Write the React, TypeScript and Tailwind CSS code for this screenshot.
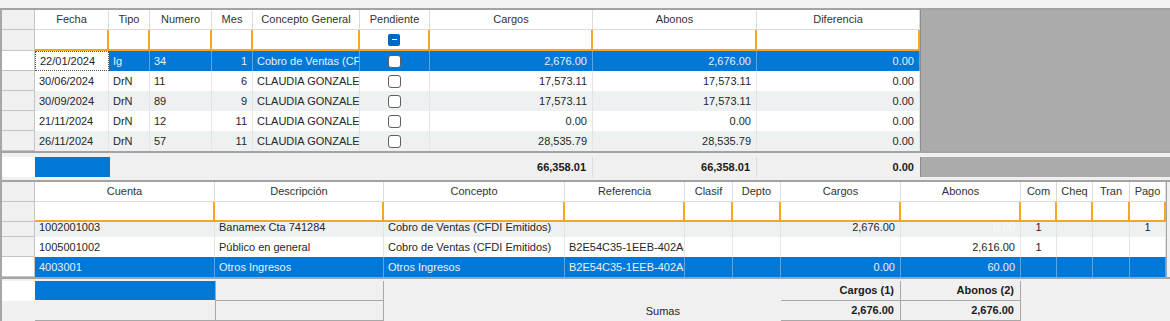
import React from 'react';

type Align = 'left' | 'right' | 'center';
type Col = { w: string; label: string; align: Align };

const cols1: Col[] = [
  { w: 'w-[74px]', label: 'Fecha', align: 'left' },
  { w: 'w-[41px]', label: 'Tipo', align: 'left' },
  { w: 'w-[62px]', label: 'Numero', align: 'left' },
  { w: 'w-[41px]', label: 'Mes', align: 'right' },
  { w: 'w-[107px]', label: 'Concepto General', align: 'left' },
  { w: 'w-[70px]', label: 'Pendiente', align: 'center' },
  { w: 'w-[163px]', label: 'Cargos', align: 'right' },
  { w: 'w-[164px]', label: 'Abonos', align: 'right' },
  { w: 'w-[163px]', label: 'Diferencia', align: 'right' },
];

const rows1: (string | boolean)[][] = [
  ['22/01/2024', 'Ig', '34', '1', 'Cobro de Ventas (CFDI Emitidos)', false, '2,676.00', '2,676.00', '0.00'],
  ['30/06/2024', 'DrN', '11', '6', 'CLAUDIA GONZALEZ HERNANDEZ', false, '17,573.11', '17,573.11', '0.00'],
  ['30/09/2024', 'DrN', '89', '9', 'CLAUDIA GONZALEZ HERNANDEZ', false, '17,573.11', '17,573.11', '0.00'],
  ['21/11/2024', 'DrN', '12', '11', 'CLAUDIA GONZALEZ HERNANDEZ', false, '0.00', '0.00', '0.00'],
  ['26/11/2024', 'DrN', '57', '11', 'CLAUDIA GONZALEZ HERNANDEZ', false, '28,535.79', '28,535.79', '0.00'],
];

const cols2: Col[] = [
  { w: 'w-[180px]', label: 'Cuenta', align: 'left' },
  { w: 'w-[169px]', label: 'Descripción', align: 'left' },
  { w: 'w-[181px]', label: 'Concepto', align: 'left' },
  { w: 'w-[120px]', label: 'Referencia', align: 'left' },
  { w: 'w-[48px]', label: 'Clasif', align: 'left' },
  { w: 'w-[48px]', label: 'Depto', align: 'left' },
  { w: 'w-[120px]', label: 'Cargos', align: 'right' },
  { w: 'w-[120px]', label: 'Abonos', align: 'right' },
  { w: 'w-[36px]', label: 'Com', align: 'center' },
  { w: 'w-[36px]', label: 'Cheq', align: 'center' },
  { w: 'w-[37px]', label: 'Tran', align: 'center' },
  { w: 'w-[36px]', label: 'Pago', align: 'center' },
];

const rows2: string[][] = [
  ['1002001003', 'Banamex Cta 741284', 'Cobro de Ventas (CFDI Emitidos)', '', '', '', '2,676.00', '0.00', '1', '', '', '1'],
  ['1005001002', 'Público en general', 'Cobro de Ventas (CFDI Emitidos)', 'B2E54C35-1EEB-402A-9B1C', '', '', '', '2,616.00', '1', '', '', ''],
  ['4003001', 'Otros Ingresos', 'Otros Ingresos', 'B2E54C35-1EEB-402A-9B1C', '', '', '0.00', '60.00', '', '', '', ''],
];

function alignCls(a: Align) {
  if (a === 'right') return 'justify-end pr-[5px]';
  if (a === 'center') return 'justify-center';
  return 'justify-start pl-[4px]';
}

function Indicator({ white, h = 'h-[20px]' }: { white?: boolean; h?: string }) {
  return (
    <div
      className={`w-[33px] shrink-0 ${h} border-r border-b border-[#c4c4c4] ${white ? 'bg-white' : 'bg-[#f0f0f0]'}`}
    />
  );
}

function Check() {
  return <div className="w-[13px] h-[13px] rounded-[3px] border border-[#5f5f5f] bg-white" />;
}

function FilterCheck() {
  return (
    <div className="w-[12px] h-[12px] rounded-[2px] bg-[#0067c0] flex items-center justify-center">
      <div className="w-[5px] h-[1px] bg-white" />
    </div>
  );
}

function HeaderRow({ cols }: { cols: Col[] }) {
  return (
    <div className="flex h-[20px]">
      <Indicator />
      {cols.map((c) => (
        <div
          key={c.label}
          className={`${c.w} shrink-0 h-[20px] bg-white border-r border-b border-[#dadada] flex items-center justify-center text-[#333] whitespace-nowrap overflow-hidden`}
        >
          {c.label}
        </div>
      ))}
    </div>
  );
}

function FilterRow({ cols, h, withCheck }: { cols: Col[]; h: string; withCheck?: boolean }) {
  return (
    <div className={`flex ${h}`}>
      <Indicator h={h} />
      {cols.map((c) => (
        <div
          key={c.label}
          className={`${c.w} shrink-0 ${h} bg-white border-r-2 border-b-2 border-[#f7a623] flex items-center justify-center`}
        >
          {withCheck && c.label === 'Pendiente' ? <FilterCheck /> : null}
        </div>
      ))}
    </div>
  );
}

export default function App() {
  return (
    <div className="w-[1170px] h-[321px] overflow-hidden bg-[#f0f0f0] text-[11px] leading-none text-[#262626] font-['Liberation_Sans',Arial,sans-serif]">
      {/* top strip */}
      <div className="h-[8px] bg-[#f3f3f3]" />

      <div className="border-l-2 border-[#a6a6a6]">
        {/* ===== Grid 1 ===== */}
        <div className="border-t-2 border-b-2 border-[#a3a3a3] flex">
          <div className="w-[918px] shrink-0">
            <HeaderRow cols={cols1} />
            <FilterRow cols={cols1} h="h-[21px]" withCheck />
            {rows1.map((r, ri) => {
              const sel = ri === 0;
              const tint = ri % 2 === 0;
              return (
                <div key={ri} className="flex h-[20px]">
                  <Indicator white={sel} />
                  {cols1.map((c, ci) => {
                    const v = r[ci];
                    const focus = sel && ci === 0;
                    const bg = focus
                      ? 'bg-white'
                      : sel
                      ? 'bg-[#0078d7] text-[#e8f1fb]'
                      : tint
                      ? 'bg-[#edf1f1]'
                      : 'bg-white';
                    const border = focus
                      ? 'border border-dotted border-[#555]'
                      : sel
                      ? 'border-r border-[#5aa6e6]'
                      : 'border-r border-[#e2e5e5]';
                    return (
                      <div
                        key={ci}
                        className={`${c.w} shrink-0 h-[20px] ${bg} ${border} flex items-center ${alignCls(c.align)} whitespace-nowrap overflow-hidden`}
                      >
                        {typeof v === 'boolean' ? <Check /> : v}
                      </div>
                    );
                  })}
                </div>
              );
            })}
          </div>
          <div className="flex-1 bg-[#ababab] border-l border-[#8c8c8c]" />
        </div>

        {/* ===== Footer totals ===== */}
        <div className="h-[4px]" />
        <div className="flex h-[20px]">
          <div className="w-[33px] shrink-0 bg-white" />
          <div className="w-[75px] shrink-0 bg-[#0078d7]" />
          <div className="w-[320px] shrink-0" />
          <div className="w-[163px] shrink-0 border-r border-[#dcdcdc] flex items-center justify-end pr-[6px] font-bold text-[#1a1a1a]">
            66,358.01
          </div>
          <div className="w-[164px] shrink-0 border-r border-[#dcdcdc] flex items-center justify-end pr-[6px] font-bold text-[#1a1a1a]">
            66,358.01
          </div>
          <div className="w-[163px] shrink-0 flex items-center justify-end pr-[6px] font-bold text-[#1a1a1a]">
            0.00
          </div>
          <div className="flex-1 bg-[#ababab] border-l border-[#8c8c8c]" />
        </div>
        <div className="h-[3px]" />

        {/* ===== Grid 2 ===== */}
        <div className="border-t-2 border-b-2 border-[#a3a3a3] flex">
          <div className="w-[1164px] shrink-0">
            <HeaderRow cols={cols2} />
            <FilterRow cols={cols2} h="h-[20px]" />
            <div className="h-[55px] overflow-hidden">
              <div className="-mt-[5px]">
                {rows2.map((r, ri) => {
                  const sel = ri === 2;
                  const tint = ri % 2 === 0;
                  return (
                    <div key={ri} className="flex h-[20px]">
                      <Indicator white={sel} />
                      {cols2.map((c, ci) => {
                        const faint = ri === 0 && ci === 7;
                        const bg = sel
                          ? 'bg-[#0078d7] text-[#e8f1fb]'
                          : tint
                          ? 'bg-[#edf1f1]'
                          : 'bg-white';
                        const border = sel ? 'border-r border-[#5aa6e6]' : 'border-r border-[#e2e5e5]';
                        return (
                          <div
                            key={ci}
                            className={`${c.w} shrink-0 h-[20px] ${bg} ${border} flex items-center ${alignCls(c.align)} whitespace-nowrap overflow-hidden ${faint ? 'text-[#fafafa]' : ''}`}
                          >
                            {r[ci]}
                          </div>
                        );
                      })}
                    </div>
                  );
                })}
              </div>
            </div>
          </div>
          <div className="flex-1 bg-[#f0f0f0] border-l border-[#a3a3a3]" />
        </div>
        <div className="h-[2px]" />

        {/* ===== Bottom summary panel ===== */}
        <div className="flex h-[40px]">
          <div className="w-[33px] shrink-0 flex flex-col">
            <div className="h-[20px] bg-white" />
            <div className="h-[20px]" />
          </div>
          <div className="w-[180px] shrink-0 flex flex-col">
            <div className="h-[19px] bg-[#0078d7]" />
            <div className="h-[21px] border-b border-[#a8a8a8]" />
          </div>
          <div className="w-[169px] shrink-0 flex flex-col border-l border-r border-[#a8a8a8]">
            <div className="h-[20px] border-b border-[#a8a8a8]" />
            <div className="h-[20px] border-b border-[#a8a8a8]" />
          </div>
          <div className="w-[397px] shrink-0 flex flex-col">
            <div className="h-[20px]" />
            <div className="h-[20px] w-[301px] flex items-center justify-end pr-[5px] text-[#262626]">
              Sumas
            </div>
          </div>
          <div className="w-[120px] shrink-0 flex flex-col border-r border-[#a8a8a8]">
            <div className="h-[20px] border-b border-[#a8a8a8] flex items-center justify-end pr-[6px] font-bold text-[#1a1a1a]">
              Cargos (1)
            </div>
            <div className="h-[20px] border-b border-[#a8a8a8] flex items-center justify-end pr-[6px] font-bold text-[#1a1a1a]">
              2,676.00
            </div>
          </div>
          <div className="w-[120px] shrink-0 flex flex-col border-r border-[#a8a8a8]">
            <div className="h-[20px] border-b border-[#a8a8a8] flex items-center justify-end pr-[6px] font-bold text-[#1a1a1a]">
              Abonos (2)
            </div>
            <div className="h-[20px] border-b border-[#a8a8a8] flex items-center justify-end pr-[6px] font-bold text-[#1a1a1a]">
              2,676.00
            </div>
          </div>
          <div className="flex-1" />
        </div>
      </div>
    </div>
  );
}
